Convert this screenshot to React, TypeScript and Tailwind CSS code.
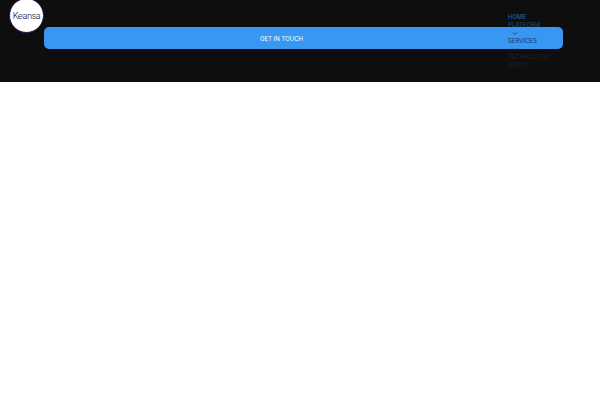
function Chevron({ color }: { color: string }) {
  return (
    <span className="flex h-[8px] items-center pl-[4px]">
      <svg width="6" height="5" viewBox="0 0 6 5" fill="none" stroke={color} strokeWidth="0.8"><path d="M1 1.5 3 3.5 5 1.5" /></svg>
    </span>
  );
}

export default function App() {
  return (
    <div className="min-h-[400px] bg-white font-['Inter','Liberation_Sans',sans-serif]">
      <header className="relative h-[82px] bg-[#0e0e0f]">
        <div className="absolute left-[9px] top-[-2px] flex h-[35px] w-[35px] items-center justify-center rounded-full border border-[#1d1145] bg-white text-[9px] font-light tracking-[-0.5px] text-[#2a2350]">Keansa</div>
        <div className="pl-[44px] pr-[37px] pt-[27px]">
          <button className="flex h-[22px] w-full items-center justify-center rounded-[5px] bg-[#3897f0] pr-[44px] pt-[1px] text-[6px] font-normal text-white">GET IN TOUCH</button>
        </div>
        <nav className="absolute left-[508px] top-[13px] flex w-[52px] flex-col text-[6px] leading-[8px] text-[#123a66]">
          <span className="text-[#1a6fb5]">HOME</span>
          <span className="text-[#1b4a78]">PLATFORM</span>
          <Chevron color="#123a66" />
          <span>SERVICES</span>
          <Chevron color="#222" />
          <span className="text-[#222]">TECHNOLOGY</span>
          <span className="text-[#222]">ABOUT</span>
        </nav>
      </header>
    </div>
  );
}
